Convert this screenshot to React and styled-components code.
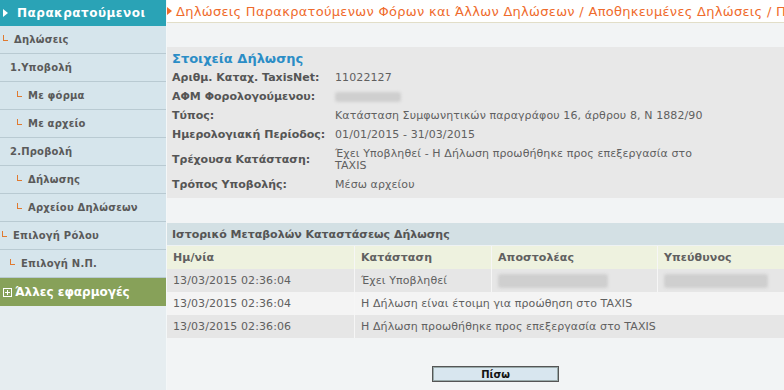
import React from 'react';
import styled, { createGlobalStyle } from 'styled-components';

const Global = createGlobalStyle`
  html, body {
    margin: 0;
    padding: 0;
    background: #f2f4f5;
    font-family: "DejaVu Sans", Verdana, sans-serif;
    font-size: 11px;
    color: #555;
  }
`;

const Pagina = styled.div`
  display: flex;
  width: 784px;
  height: 390px;
  overflow: hidden;
  background: #f2f4f5;
`;

const Menu = styled.nav`
  width: 166px;
  flex-shrink: 0;
  background: #e6edf0;
  border-right: 1px solid #f4f7f8;
  display: flex;
  flex-direction: column;
`;

const MenuTopo = styled.div`
  height: 26px;
  background: #2aa3b6;
  color: #fff;
  font-weight: bold;
  font-size: 12px;
  letter-spacing: 0.5px;
  display: flex;
  align-items: center;
  padding-left: 3px;
  gap: 9px;
`;

const Seta = styled.span`
  width: 0;
  height: 0;
  border-top: 4px solid transparent;
  border-bottom: 4px solid transparent;
  border-left: 5px solid ${p => p.cor || '#fff'};
`;

const MenuItem = styled.div`
  height: 27px;
  background: #d6e5ec;
  border-bottom: 1px solid #b9cad2;
  display: flex;
  align-items: center;
  padding-left: ${p => p.recuo}px;
  gap: 6px;
  font-weight: bold;
  font-size: 10px;
  color: #5a5a5a;
  letter-spacing: 0.2px;
`;

const Canto = styled.span`
  width: 4px;
  height: 5px;
  border-left: 1px solid #e07a30;
  border-bottom: 1px solid #e07a30;
  margin-bottom: 4px;
`;

const MenuVerde = styled.div`
  height: 28px;
  background: #87a159;
  color: #fff;
  font-weight: bold;
  font-size: 12px;
  display: flex;
  align-items: center;
  padding-left: 3px;
  gap: 3px;
`;

const Mais = styled.span`
  width: 7px;
  height: 7px;
  border: 1px solid #fff;
  position: relative;
  &::before, &::after {
    content: '';
    position: absolute;
    background: #fff;
  }
  &::before { left: 1px; right: 1px; top: 3px; height: 1px; }
  &::after { top: 1px; bottom: 1px; left: 3px; width: 1px; }
`;

const Conteudo = styled.main`
  flex: 1;
  display: flex;
  flex-direction: column;
  min-width: 0;
`;

const Titulo = styled.div`
  height: 22px;
  background: #fff;
  border-bottom: 1px solid #e2dec8;
  display: flex;
  align-items: center;
  gap: 4px;
  color: #ef6b2c;
  font-size: 13px;
  letter-spacing: 0.3px;
  white-space: nowrap;
  overflow: hidden;
`;

const Espaco = styled.div`
  height: ${p => p.h}px;
  flex-shrink: 0;
`;

const Painel = styled.section`
  background: #e8e8e8;
  padding: 3px 0 4px 5px;
`;

const PainelTitulo = styled.div`
  color: #2b8dc6;
  font-weight: bold;
  font-size: 13px;
  height: 18px;
  line-height: 18px;
`;

const Campos = styled.div`
  display: grid;
  grid-template-columns: 163px 1fr;
  align-items: center;
`;

const Rotulo = styled.div`
  font-weight: bold;
  color: #555;
  padding: 4px 0 3px;
  line-height: 12px;
`;

const Valor = styled.div`
  color: #606060;
  padding: 4px 0 3px;
  line-height: 12px;
  max-width: 390px;
  letter-spacing: 0.1px;
`;

const Oculto = styled.span`
  display: inline-block;
  width: ${p => p.w}px;
  height: ${p => p.h || 10}px;
  background: #cfcfcf;
  border-radius: 3px;
  filter: blur(1.5px);
  vertical-align: middle;
`;

const Tabela = styled.div`
  display: grid;
  grid-template-columns: 187px 137px 166px 1fr;
`;

const TabelaTitulo = styled.div`
  grid-column: 1 / -1;
  height: 22px;
  background: #d3e0e4;
  font-weight: bold;
  display: flex;
  align-items: center;
  padding-left: 5px;
  border-bottom: 1px solid #eef2f3;
`;

const Celula = styled.div`
  grid-column: span ${p => p.span || 1};
  height: 23px;
  display: flex;
  align-items: center;
  padding-left: 6px;
  color: #606060;
  background: ${p => (p.cab ? '#eef2df' : p.par ? '#f4f4f4' : '#e6e6e6')};
  font-weight: ${p => (p.cab ? 'bold' : 'normal')};
  border-left: ${p => (p.primeira ? 'none' : '1px solid #f6f6f6')};
  white-space: nowrap;
  letter-spacing: 0.1px;
`;

const Rodape = styled.div`
  display: flex;
  justify-content: center;
  padding-left: 40px;
`;

const Botao = styled.button`
  width: 127px;
  height: 16px;
  padding: 0;
  background: #d8e6ef;
  border: 1px solid #555;
  box-shadow: inset 0 0 0 1px #9aa;
  font-family: "DejaVu Sans", Verdana, sans-serif;
  font-weight: bold;
  font-size: 10px;
  color: #111;
`;

const menu = [
  { t: 'Δηλώσεις', r: 3, c: true },
  { t: '1.Υποβολή', r: 10 },
  { t: 'Με φόρμα', r: 17, c: true },
  { t: 'Με αρχείο', r: 17, c: true },
  { t: '2.Προβολή', r: 10 },
  { t: 'Δήλωσης', r: 17, c: true },
  { t: 'Αρχείου Δηλώσεων', r: 17, c: true },
  { t: 'Επιλογή Ρόλου', r: 2, c: true },
  { t: 'Επιλογή Ν.Π.', r: 10, c: true },
];

const historico = [
  ['13/03/2015 02:36:04', 'Έχει Υποβληθεί', true],
  ['13/03/2015 02:36:04', 'Η Δήλωση είναι έτοιμη για προώθηση στο TAXIS', false],
  ['13/03/2015 02:36:06', 'Η Δήλωση προωθήθηκε προς επεξεργασία στο TAXIS', false],
];

const App = () => (
  <>
    <Global />
    <Pagina>
      <Menu>
        <MenuTopo>
          <Seta />
          Παρακρατούμενοι
        </MenuTopo>
        {menu.map(item => (
          <MenuItem key={item.t} recuo={item.r}>
            {item.c && <Canto />}
            {item.t}
          </MenuItem>
        ))}
        <MenuVerde>
          <Mais />
          Άλλες εφαρμογές
        </MenuVerde>
      </Menu>
      <Conteudo>
        <Titulo>
          <Seta cor="#ef6b2c" />
          Δηλώσεις Παρακρατούμενων Φόρων και Άλλων Δηλώσεων / Αποθηκευμένες Δηλώσεις / Προβολή
        </Titulo>
        <Espaco h={24} />
        <Painel>
          <PainelTitulo>Στοιχεία Δήλωσης</PainelTitulo>
          <Campos>
            <Rotulo>Αριθμ. Καταχ. TaxisNet:</Rotulo>
            <Valor>11022127</Valor>
            <Rotulo>ΑΦΜ Φορολογούμενου:</Rotulo>
            <Valor><Oculto w={66} /></Valor>
            <Rotulo>Τύπος:</Rotulo>
            <Valor>Κατάσταση Συμφωνητικών παραγράφου 16, άρθρου 8, Ν 1882/90</Valor>
            <Rotulo>Ημερολογιακή Περίοδος:</Rotulo>
            <Valor>01/01/2015 - 31/03/2015</Valor>
            <Rotulo>Τρέχουσα Κατάσταση:</Rotulo>
            <Valor>Έχει Υποβληθεί - Η Δήλωση προωθήθηκε προς επεξεργασία στο TAXIS</Valor>
            <Rotulo>Τρόπος Υποβολής:</Rotulo>
            <Valor>Μέσω αρχείου</Valor>
          </Campos>
        </Painel>
        <Espaco h={25} />
        <Tabela>
          <TabelaTitulo>Ιστορικό Μεταβολών Καταστάσεως Δήλωσης</TabelaTitulo>
          <Celula cab primeira>Ημ/νία</Celula>
          <Celula cab>Κατάσταση</Celula>
          <Celula cab>Αποστολέας</Celula>
          <Celula cab>Υπεύθυνος</Celula>
          {historico.map(([data, estado, comNomes], i) => (
            <React.Fragment key={i}>
              <Celula par={i % 2 === 1} primeira>{data}</Celula>
              {comNomes ? (
                <>
                  <Celula>{estado}</Celula>
                  <Celula><Oculto w={110} h={14} /></Celula>
                  <Celula><Oculto w={104} h={14} /></Celula>
                </>
              ) : (
                <Celula par={i % 2 === 1} span={3}>{estado}</Celula>
              )}
            </React.Fragment>
          ))}
        </Tabela>
        <Espaco h={28} />
        <Rodape>
          <Botao>Πίσω</Botao>
        </Rodape>
      </Conteudo>
    </Pagina>
  </>
);

export default App;
